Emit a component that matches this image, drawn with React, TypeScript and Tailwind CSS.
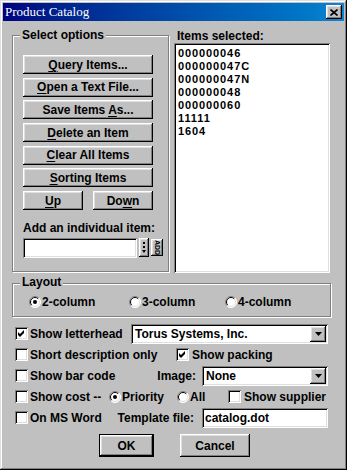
import React from 'react';

const raised =
  'bg-[#c0c0c0] shadow-[inset_-1px_-1px_0_#000,inset_1px_1px_0_#fff,inset_-2px_-2px_0_#808080,inset_2px_2px_0_#dfdfdf]';
const sunken =
  'bg-white shadow-[inset_1px_1px_0_#808080,inset_-1px_-1px_0_#fff,inset_2px_2px_0_#000,inset_-2px_-2px_0_#dfdfdf]';
const etched = 'border border-[#808080] shadow-[inset_1px_1px_0_#fff,1px_1px_0_#fff]';

const items = ['000000046', '000000047C', '000000047N', '000000048', '000000060', '11111', '1604'];

const Btn = ({ children, className = '' }: { children: React.ReactNode; className?: string }) => (
  <div className={`${raised} flex items-center justify-center ${className}`}>
    <span>{children}</span>
  </div>
);

const U = ({ children }: { children: React.ReactNode }) => (
  <span className="underline decoration-1 underline-offset-[2px]">{children}</span>
);

const Check = ({ checked = false }: { checked?: boolean }) => (
  <div className={`${sunken} w-[13px] h-[13px] shrink-0 relative`}>
    {checked && (
      <svg width="13" height="13" viewBox="0 0 13 13" className="absolute inset-0">
        <polygon points="3,5 5,7 9,3 9,6 5,10 3,8" fill="#000" />
      </svg>
    )}
  </div>
);

const Radio = ({ checked = false }: { checked?: boolean }) => (
  <svg width="12" height="12" viewBox="0 0 12 12" className="shrink-0">
    <circle cx="6" cy="6" r="5.5" fill="#fff" />
    <path d="M2.1 9.9 A5.5 5.5 0 0 1 9.9 2.1" stroke="#808080" strokeWidth="1" fill="none" />
    <path d="M9.9 2.1 A5.5 5.5 0 0 1 2.1 9.9" stroke="#fff" strokeWidth="1" fill="none" />
    <path d="M2.8 9.2 A4.5 4.5 0 0 1 9.2 2.8" stroke="#000" strokeWidth="1" fill="none" />
    <path d="M9.2 2.8 A4.5 4.5 0 0 1 2.8 9.2" stroke="#dfdfdf" strokeWidth="1" fill="none" />
    {checked && <circle cx="6" cy="6" r="2" fill="#000" />}
  </svg>
);

const Combo = ({ value, className = '' }: { value: string; className?: string }) => (
  <div className={`${sunken} h-[20px] flex items-center justify-between pl-[4px] pr-[2px] ${className}`}>
    <span>{value}</span>
    <div className={`${raised} w-[16px] h-[16px] flex items-center justify-center`}>
      <svg width="7" height="4" viewBox="0 0 7 4">
        <polygon points="0,0 7,0 3.5,4" fill="#000" />
      </svg>
    </div>
  </div>
);

export default function App() {
  return (
    <div className="w-[347px] h-[470px] bg-[#c0c0c0] p-[3px] shadow-[inset_-1px_-1px_0_#000,inset_1px_1px_0_#dfdfdf,inset_-2px_-2px_0_#808080,inset_2px_2px_0_#fff] font-['Liberation_Sans',Arial,sans-serif] text-[12px] leading-[14px] font-bold text-black select-none">
      {/* Title bar */}
      <div className="h-[18px] flex items-center justify-between pl-[2px] pr-[2px] bg-linear-to-r from-[#000080] to-[#1084d0]">
        <span className="font-['Liberation_Serif',serif] font-normal text-[13px] text-white">Product Catalog</span>
        <div className={`${raised} w-[16px] h-[14px] flex items-center justify-center`}>
          <svg width="8" height="7" viewBox="0 0 8 7">
            <path d="M0.5 0.5 L7.5 6.5 M7.5 0.5 L0.5 6.5" stroke="#000" strokeWidth="1.6" />
          </svg>
        </div>
      </div>

      <div className="pl-[9px]">
        {/* Top: options + list */}
        <div className="flex items-start mt-[7px]">
          <div className="relative pt-[7px] w-[157px]">
            <span className="absolute left-[8px] top-0 px-[2px] bg-[#c0c0c0]">Select options</span>
            <div className={`${etched} h-[237px] pt-[19px] pl-[10px]`}>
              <div className="flex flex-col gap-[3.7px] w-[130px]">
                <Btn className="h-[19px]"><U>Q</U>uery Items...</Btn>
                <Btn className="h-[19px]"><U>O</U>pen a Text File...</Btn>
                <Btn className="h-[19px]">Save Items <U>A</U>s...</Btn>
                <Btn className="h-[19px]"><U>D</U>elete an Item</Btn>
                <Btn className="h-[19px]"><U>C</U>lear All Items</Btn>
                <Btn className="h-[19px]"><U>S</U>orting Items</Btn>
                <div className="flex justify-between">
                  <Btn className="h-[19px] w-[60px]"><U>U</U>p</Btn>
                  <Btn className="h-[19px] w-[60px]">Do<U>w</U>n</Btn>
                </div>
              </div>
              <div className="mt-[11px]">Add an individual item:</div>
              <div className="flex items-start mt-[3px]">
                <div className={`${sunken} w-[114px] h-[20px]`} />
                <div className={`${raised} ml-[2px] w-[10px] h-[19px] flex flex-col items-center pt-[4px] gap-[2px]`}>
                  <div className="w-[2px] h-[2px] bg-black" />
                  <div className="w-[2px] h-[2px] bg-black" />
                  <svg width="4" height="3" viewBox="0 0 4 3"><polygon points="0,0 4,0 2,3" fill="#000" /></svg>
                </div>
                <div className={`${raised} ml-[2px] mt-[1px] w-[12px] h-[17px] flex items-center justify-center`}>
                  <span className="[writing-mode:vertical-rl] text-[7px] leading-[7px]">ADD</span>
                </div>
              </div>
            </div>
          </div>

          <div className="ml-[5px]">
            <div className="pt-[1px] pl-[3px]">Items selected:</div>
            <div className={`${sunken} w-[156px] h-[230px] pt-[4px] pl-[4px] text-[11px] leading-[13px] tracking-[0.9px]`}>
              {items.map((it) => (
                <div key={it}>{it}</div>
              ))}
            </div>
          </div>
        </div>

        {/* Layout */}
        <div className="relative pt-[8px] mt-[2px] w-[319px]">
          <span className="absolute left-[8px] top-0 px-[2px] bg-[#c0c0c0]">Layout</span>
          <div className={`${etched} h-[34px] pt-[12px] pl-[16px]`}>
            <div className="flex items-center h-[12px]">
              <div className="flex items-center gap-[1px] w-[100px]"><Radio checked />2-column</div>
              <div className="flex items-center gap-[1px] w-[96px]"><Radio />3-column</div>
              <div className="flex items-center gap-[1px]"><Radio />4-column</div>
            </div>
          </div>
        </div>

        {/* Options rows */}
        <div className="mt-[6px] w-[316px]">
          <div className="flex items-center h-[21px]">
            <div className="ml-[3px]"><Check checked /></div>
            <span className="ml-[2px]">Show letterhead</span>
            <Combo value="Torus Systems, Inc." className="ml-auto w-[197px]" />
          </div>
          <div className="flex items-center h-[21px]">
            <div className="flex items-center w-[164px]">
              <div className="ml-[3px]"><Check /></div>
              <span className="ml-[2px]">Short description only</span>
            </div>
            <Check checked />
            <span className="ml-[3px]">Show packing</span>
          </div>
          <div className="flex items-center h-[21px]">
            <div className="ml-[3px]"><Check /></div>
            <span className="ml-[2px]">Show bar code</span>
            <span className="ml-auto mr-[6px]">Image:</span>
            <Combo value="None" className="w-[126px]" />
          </div>
          <div className="flex items-center h-[21px]">
            <div className="flex items-center w-[97px]">
              <div className="ml-[3px]"><Check /></div>
              <span className="ml-[2px]">Show cost --</span>
            </div>
            <div className="flex items-center gap-[1px] w-[68px]"><Radio checked />Priority</div>
            <div className="flex items-center gap-[1px] w-[51px]"><Radio />All</div>
            <Check />
            <span className="ml-[3px]">Show supplier</span>
          </div>
          <div className="flex items-center h-[21px]">
            <div className="ml-[3px]"><Check /></div>
            <span className="ml-[2px]">On MS Word</span>
            <span className="ml-auto mr-[8px]">Template file:</span>
            <div className={`${sunken} w-[126px] h-[20px] flex items-center pl-[3px]`}>catalog.dot</div>
          </div>
        </div>

        {/* Dialog buttons */}
        <div className="flex mt-[6px]">
          <div className="ml-[87px] border border-black">
            <Btn className="w-[53px] h-[21px]">OK</Btn>
          </div>
          <Btn className="ml-[26px] w-[70px] h-[23px]">Cancel</Btn>
        </div>
      </div>
    </div>
  );
}
